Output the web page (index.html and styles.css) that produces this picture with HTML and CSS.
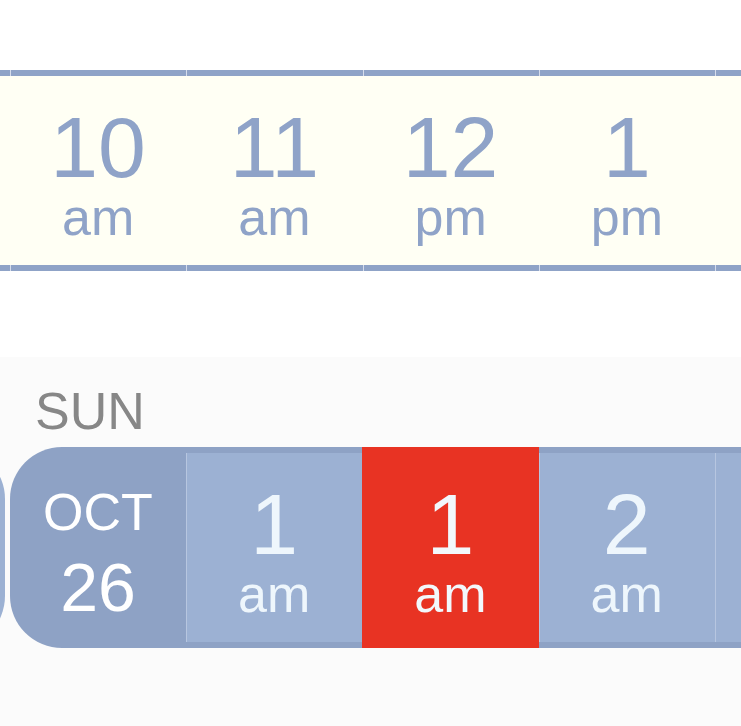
FILE: index.html
```html
<!DOCTYPE html>
<html>
<head>
<meta charset="utf-8">
<link rel="stylesheet" href="styles.css">
</head>
<body>
<section class="top">
  <div class="strip">
    <div class="tcell"><div class="num">9</div><div class="mer">am</div></div>
    <div class="tcell"><div class="num">10</div><div class="mer">am</div></div>
    <div class="tcell"><div class="num">11</div><div class="mer">am</div></div>
    <div class="tcell"><div class="num">12</div><div class="mer">pm</div></div>
    <div class="tcell"><div class="num">1</div><div class="mer">pm</div></div>
    <div class="tcell"><div class="num">2</div><div class="mer">pm</div></div>
  </div>
</section>
<section class="day">
  <div class="dayname">SUN</div>
  <div class="row">
    <div class="prev"></div>
    <div class="date"><div class="mon">OCT</div><div class="dnum">26</div></div>
    <div class="hcell"><div class="num">1</div><div class="mer">am</div></div>
    <div class="hcell now"><div class="num">1</div><div class="mer">am</div></div>
    <div class="hcell"><div class="num">2</div><div class="mer">am</div></div>
    <div class="hcell"><div class="num">3</div><div class="mer">am</div></div>
  </div>
</section>
</body>
</html>
```
FILE: styles.css
```css
html, body {
  margin: 0;
  padding: 0;
  width: 741px;
  height: 726px;
  overflow: hidden;
  background: #ffffff;
  font-family: "Liberation Sans", Arial, sans-serif;
}

.top {
  height: 357px;
  padding-top: 70px;
  box-sizing: border-box;
  overflow: hidden;
}

.strip {
  display: flex;
  background: #fffff4;
  width: 741px;
  overflow: hidden;
}

.tcell {
  flex: none;
  width: 176.25px;
  height: 201px;
  box-sizing: border-box;
  border-top: 6px solid #8fa3c7;
  border-bottom: 6px solid #8fa3c7;
  padding-top: 28px;
  text-align: center;
  color: #8fa3c8;
  position: relative;
}

.tcell:first-child {
  margin-left: -166.25px;
}

.tcell::before,
.tcell::after {
  content: "";
  position: absolute;
  left: 0;
  width: 1px;
  height: 6px;
  background: #d6ddec;
}

.tcell::before { top: -6px; }
.tcell::after { bottom: -6px; }

.num {
  font-size: 86px;
  line-height: 86px;
}

.mer {
  font-size: 52px;
  line-height: 52px;
  margin-top: 1px;
}

.day {
  height: 369px;
  background: #fbfbfb;
  padding-top: 28px;
  box-sizing: border-box;
  overflow: hidden;
}

.dayname {
  font-size: 52px;
  line-height: 52px;
  color: #878787;
  padding-left: 35px;
  margin-bottom: 10px;
}

.row {
  display: flex;
  width: 741px;
  overflow: hidden;
}

.prev {
  flex: none;
  width: 100px;
  height: 201px;
  margin-left: -95.5px;
  margin-right: 5.5px;
  background: #9cb1d3;
  border-radius: 0 52px 52px 0;
}

.date {
  flex: none;
  width: 176px;
  height: 201px;
  box-sizing: border-box;
  background: #8ea2c5;
  border-radius: 52px 0 0 52px;
  color: #ffffff;
  text-align: center;
  padding-top: 39px;
}

.mon {
  font-size: 52px;
  line-height: 52px;
}

.dnum {
  font-size: 68px;
  line-height: 68px;
  margin-top: 15px;
}

.hcell {
  flex: none;
  width: 176.25px;
  height: 201px;
  box-sizing: border-box;
  background: #9cb1d3;
  border-top: 6px solid #8ea2c5;
  border-bottom: 6px solid #8ea2c5;
  box-shadow: inset 1px 0 0 #b7c6e0;
  color: #eef6fc;
  text-align: center;
  padding-top: 28px;
}

.hcell.now {
  background: #e83323;
  border-color: #e83323;
  box-shadow: none;
  color: #f2f8fc;
}
```
